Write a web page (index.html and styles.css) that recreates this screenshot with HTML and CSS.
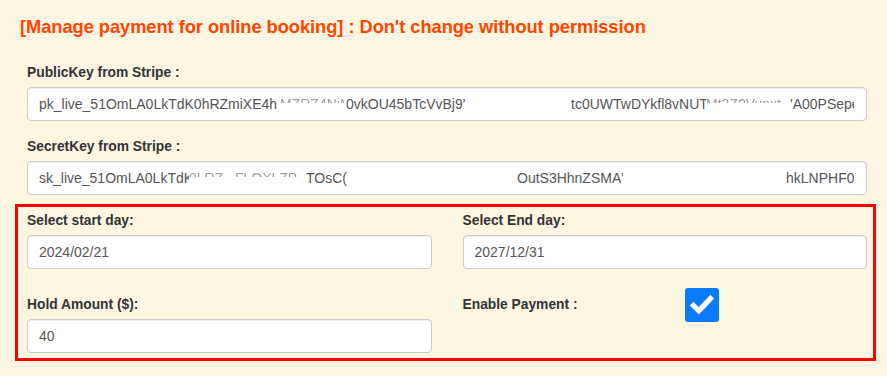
FILE: index.html
```html
<!DOCTYPE html>
<html>
<head>
<meta charset="utf-8">
<link rel="stylesheet" href="styles.css">
</head>
<body>
<div class="page">
  <h1 class="title">[Manage payment for online booking] : Don't change without permission</h1>

  <div class="field">
    <label class="lbl">PublicKey from Stripe :</label>
    <div class="input key">
      <span class="seg pa">pk_live_51OmLA0LkTdK0hRZmiXE4h</span><span class="seg faint pb">MZRZ4NiM0</span><span class="seg pc">0vkOU45bTcVvBj9'</span><span class="seg pe">tc0UWTwDYkfl8vNUT</span><span class="seg faint pf">Mt3Z?Vunxt</span><span class="seg pg">'A00PSepe</span>
    </div>
  </div>

  <div class="field second">
    <label class="lbl">SecretKey from Stripe :</label>
    <div class="input key">
      <span class="seg sa">sk_live_51OmLA0LkTdK</span><span class="seg faint sb">0LRZ..,FLQXLZP</span><span class="seg sc">TOsC(</span><span class="seg sd"></span><span class="seg se">OutS3HhnZSMA'</span><span class="seg sf"></span><span class="seg sg">hkLNPHF0(</span>
    </div>
  </div>

  <div class="box">
    <div class="col">
      <label class="lbl">Select start day:</label>
      <div class="input">2024/02/21</div>
      <label class="lbl lower">Hold Amount ($):</label>
      <div class="input">40</div>
    </div>
    <div class="col">
      <label class="lbl">Select End day:</label>
      <div class="input">2027/12/31</div>
      <div class="enable">
        <label class="lbl inline">Enable Payment :</label>
        <svg class="check" width="34" height="34" viewBox="0 0 34 34">
          <rect x="0" y="0" width="34" height="34" rx="3" fill="#0a7bff"/>
          <path d="M8.5 17.5 L13.8 22.8 L25.5 10.5" fill="none" stroke="#fff" stroke-width="5.2" stroke-linecap="square" stroke-linejoin="miter"/>
        </svg>
      </div>
    </div>
  </div>
</div>
</body>
</html>
```

FILE: styles.css
```css
* { box-sizing: border-box; }
html, body {
  margin: 0;
  padding: 0;
  background: #fdf6e3;
}
body {
  font-family: "Liberation Sans", Arial, sans-serif;
  width: 887px;
  height: 376px;
  overflow: hidden;
}
.page {
  padding-top: 16px;
}
.title {
  margin: 0 0 0 20px;
  font-size: 18.2px;
  line-height: 22px;
  font-weight: bold;
  color: #ff4500;
}
.field {
  display: flex;
  flex-direction: column;
  padding: 0 20px 0 27px;
  margin-top: 26px;
}
.field.second {
  margin-top: 17px;
}
.lbl {
  display: block;
  font-size: 13.8px;
  line-height: 18px;
  font-weight: bold;
  color: #333;
  margin-bottom: 5px;
}
.input {
  height: 34px;
  border: 1px solid #ccc;
  border-radius: 4px;
  background: #fff;
  box-shadow: inset 0 1px 1px rgba(0,0,0,0.075);
  padding: 0 12px 0 11px;
  font-size: 14px;
  line-height: 32px;
  color: #555;
  white-space: nowrap;
  overflow: hidden;
}
.key {
  display: flex;
}
.seg {
  flex: none;
  display: block;
  overflow: hidden;
  white-space: nowrap;
}
.faint {
  color: transparent;
  background-image: linear-gradient(to bottom, transparent 0, transparent 9px, #9a9a9a 9px, #9a9a9a 15px, transparent 15px);
  -webkit-background-clip: text;
  background-clip: text;
}
.pa { width: 241px; }
.pb { width: 66px; }
.pc { width: 225px; }
.pe { width: 135px; }
.pf { width: 84px; }
.pg { flex: 1; width: auto; }
.sa { width: 150px; }
.sb { width: 117px; }
.sc { width: 50px; }
.sd { width: 161px; }
.se { width: 106px; }
.sf { width: 163px; }
.sg { flex: 1; width: auto; }

.box {
  margin: 9px 11px 0 15px;
  border: 3px solid #ff0000;
  padding: 5px 6px 5px 9px;
  display: grid;
  grid-template-columns: 1fr 1fr;
  column-gap: 31px;
}
.col {
  display: flex;
  flex-direction: column;
}
.lbl.lower {
  margin-top: 27px;
}
.enable {
  display: flex;
  align-items: center;
  margin-top: 19px;
}
.lbl.inline {
  width: 222px;
  margin-bottom: 0;
}
.check {
  display: block;
}
```
